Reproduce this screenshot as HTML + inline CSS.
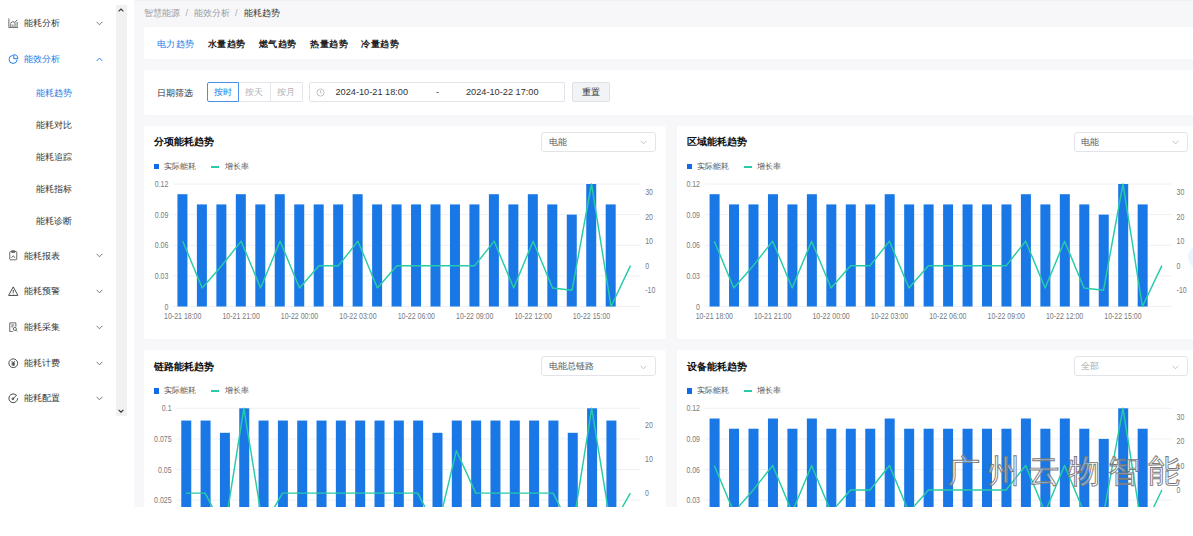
<!DOCTYPE html>
<html><head><meta charset="utf-8">
<style>
*{margin:0;padding:0;box-sizing:border-box}
html,body{width:1193px;height:536px;overflow:hidden;background:#fff;font-family:"Liberation Sans", sans-serif}
#page{position:absolute;left:0;top:0;width:1193px;height:507px;overflow:hidden;background:#fff}
.mi{position:absolute;left:0;width:117px;height:14px;line-height:14px;font-size:9px}
.mi .ic{position:absolute;left:8px;top:1.75px;width:10.5px;height:10.5px}
.mi .ic svg{display:block}
.mi .mt{position:absolute;left:23.5px;top:0}
.mi .chev{position:absolute;left:96px;top:4.8px;width:7px;height:5px}
.mi .chev svg{display:block}
.si{position:absolute;left:36px;height:14px;line-height:14px;font-size:9px}
#sb{position:absolute;left:116.3px;top:5px;width:10.7px;height:411px;background:#f1f1f1}
#main{position:absolute;left:134px;top:0;width:1059px;height:507px;background:#f7f7f9;border-top:1px solid #f0f0f2}
.card{position:absolute;background:#fff;border-radius:3px}
.bc{position:absolute;top:6px;height:14px;line-height:14px;font-size:9px;color:#999}
.tab{position:absolute;top:36.5px;height:14px;line-height:14px;font-size:9.4px;font-weight:600;color:#222;letter-spacing:0.6px}
.lbl{position:absolute;font-size:8.8px;color:#333;line-height:14px;height:14px}
.btn{position:absolute;top:81.8px;height:20.6px;width:32px;border:1px solid #e3e5ea;font-size:8.8px;line-height:18.8px;text-align:center;color:#b0b3b9;background:#fff}
.title{position:absolute;font-size:10.3px;font-weight:bold;color:#111;line-height:14px;height:14px}
.sel{position:absolute;height:20px;border:1px solid #e2e4e9;border-radius:3px;background:#fff;font-size:9px;color:#555;line-height:18px;padding-left:6.5px}
.sel svg{position:absolute;right:8px;top:7.5px}
.leg{position:absolute;font-size:7.8px;color:#555;line-height:10px;height:10px}
.sq{position:absolute;width:5.2px;height:5.4px;background:#0f6be6}
.ln{position:absolute;width:8px;height:2px;background:#26cca6}
svg#charts{position:absolute;left:0;top:0}
.j{display:inline-block;white-space:nowrap;text-align:justify;text-align-last:justify;vertical-align:top}
.wm{font-family:"Liberation Sans", sans-serif}
.ax{font-family:"Liberation Sans", sans-serif;font-size:8.8px;fill:#777a80}
</style></head><body>
<div id="page">
<div id="side">
<div class="mi" style="top:16.0px;color:#333"><span class="ic"><svg width="10.5" height="10.5" viewBox="0 0 12 12" fill="none" stroke="#555" stroke-width="1"><path d="M1 0.5 V11 H11.5"/><path d="M3.2 10.5 V6.5 M5.6 10.5 V7.5 M8 10.5 V5.5 M10.4 10.5 V4.5"/><path d="M2.8 5.8 L5.4 4.2 L7.6 5 L10.6 2.2"/></svg></span><span class="mt"><span class="j" style="width:36px">能耗分析</span></span><span class="chev"><svg width="7" height="5" viewBox="0 0 7 5"><path d="M0.6 0.8 L3.5 3.8 L6.4 0.8" fill="none" stroke="#666" stroke-width="0.9"/></svg></span></div>
<div class="mi" style="top:52.0px;color:#1a78e6"><span class="ic"><svg width="10.5" height="10.5" viewBox="0 0 12 12" fill="none" stroke="#1a78e6" stroke-width="1.1"><path d="M5.4 1.6 A4.6 4.6 0 1 0 10.4 6.6"/><path d="M6.6 0.8 V5.4 H11.2 A4.6 4.6 0 0 0 6.6 0.8 Z"/></svg></span><span class="mt"><span class="j" style="width:36px">能效分析</span></span><span class="chev"><svg width="7" height="5" viewBox="0 0 7 5"><path d="M0.6 4 L3.5 1 L6.4 4" fill="none" stroke="#1a78e6" stroke-width="0.9"/></svg></span></div>
<div class="si" style="top:85.8px;color:#1a78e6"><span class="j" style="width:36px">能耗趋势</span></div>
<div class="si" style="top:118.0px;color:#333"><span class="j" style="width:36px">能耗对比</span></div>
<div class="si" style="top:150.0px;color:#333"><span class="j" style="width:36px">能耗追踪</span></div>
<div class="si" style="top:182.0px;color:#333"><span class="j" style="width:36px">能耗指标</span></div>
<div class="si" style="top:214.0px;color:#333"><span class="j" style="width:36px">能耗诊断</span></div>
<div class="mi" style="top:248.5px;color:#333"><span class="ic"><svg width="10.5" height="10.5" viewBox="0 0 12 12" fill="none" stroke="#555" stroke-width="1"><rect x="2" y="1.8" width="8" height="9.4" rx="1"/><rect x="4" y="0.8" width="4" height="2" rx="0.5"/><path d="M4 9 L6 6.5 L8 9"/></svg></span><span class="mt"><span class="j" style="width:36px">能耗报表</span></span><span class="chev"><svg width="7" height="5" viewBox="0 0 7 5"><path d="M0.6 0.8 L3.5 3.8 L6.4 0.8" fill="none" stroke="#666" stroke-width="0.9"/></svg></span></div>
<div class="mi" style="top:284.3px;color:#333"><span class="ic"><svg width="10.5" height="10.5" viewBox="0 0 12 12" fill="none" stroke="#333" stroke-width="1"><path d="M6 1 L11.3 10.8 H0.7 Z"/><path d="M6 4.5 V7.8 M6 8.8 V9.6"/></svg></span><span class="mt"><span class="j" style="width:36px">能耗预警</span></span><span class="chev"><svg width="7" height="5" viewBox="0 0 7 5"><path d="M0.6 0.8 L3.5 3.8 L6.4 0.8" fill="none" stroke="#666" stroke-width="0.9"/></svg></span></div>
<div class="mi" style="top:319.9px;color:#333"><span class="ic"><svg width="10.5" height="10.5" viewBox="0 0 12 12" fill="none" stroke="#555" stroke-width="1"><path d="M9 5.5 V1 H2 V11 H5.5"/><path d="M3.8 3.5 H7.2 M3.8 5.5 H6"/><circle cx="7.8" cy="8" r="1.8"/><path d="M9.1 9.3 L10.6 10.8"/></svg></span><span class="mt"><span class="j" style="width:36px">能耗采集</span></span><span class="chev"><svg width="7" height="5" viewBox="0 0 7 5"><path d="M0.6 0.8 L3.5 3.8 L6.4 0.8" fill="none" stroke="#666" stroke-width="0.9"/></svg></span></div>
<div class="mi" style="top:355.9px;color:#333"><span class="ic"><svg width="10.5" height="10.5" viewBox="0 0 12 12" fill="none" stroke="#333" stroke-width="1"><circle cx="6" cy="6" r="5"/><path d="M4 3.5 L6 5.6 L8 3.5 M4 6 H8 M4 7.8 H8 M6 5.6 V9.2"/></svg></span><span class="mt"><span class="j" style="width:36px">能耗计费</span></span><span class="chev"><svg width="7" height="5" viewBox="0 0 7 5"><path d="M0.6 0.8 L3.5 3.8 L6.4 0.8" fill="none" stroke="#666" stroke-width="0.9"/></svg></span></div>
<div class="mi" style="top:391.3px;color:#333"><span class="ic"><svg width="10.5" height="10.5" viewBox="0 0 12 12" fill="none" stroke="#333" stroke-width="1"><path d="M9.8 2.8 A5 5 0 1 0 11 6"/><path d="M5.2 7 L9.8 2.6"/><circle cx="5.6" cy="6.6" r="1"/></svg></span><span class="mt"><span class="j" style="width:36px">能耗配置</span></span><span class="chev"><svg width="7" height="5" viewBox="0 0 7 5"><path d="M0.6 0.8 L3.5 3.8 L6.4 0.8" fill="none" stroke="#666" stroke-width="0.9"/></svg></span></div>
</div>
<div id="sb">
 <svg style="position:absolute;left:2px;top:3px" width="6" height="4" viewBox="0 0 6 4"><path d="M0.6 3.4 L3 1 L5.4 3.4" fill="none" stroke="#333" stroke-width="1.1"/></svg>
 <svg style="position:absolute;left:2px;top:404px" width="6" height="4" viewBox="0 0 6 4"><path d="M0.6 0.8 L3 3.2 L5.4 0.8" fill="none" stroke="#333" stroke-width="1.1"/></svg>
</div>
<div id="main"></div>
<div class="bc" style="left:144px"><span class="j" style="width:36px">智慧能源</span></div>
<div class="bc" style="left:185.5px;color:#aaa">/</div>
<div class="bc" style="left:193.5px"><span class="j" style="width:36px">能效分析</span></div>
<div class="bc" style="left:235px;color:#aaa">/</div>
<div class="bc" style="left:244px;color:#333"><span class="j" style="width:36px">能耗趋势</span></div>

<div class="card" style="left:144px;top:27px;width:1060px;height:32px"></div>
<div class="tab" style="left:156.5px;color:#1a78e6;font-weight:500"><span class="j" style="width:38.4px">电力趋势</span></div>
<div class="tab" style="left:207.5px"><span class="j" style="width:38.4px">水量趋势</span></div>
<div class="tab" style="left:258.5px"><span class="j" style="width:38.4px">燃气趋势</span></div>
<div class="tab" style="left:310px"><span class="j" style="width:38.4px">热量趋势</span></div>
<div class="tab" style="left:361px"><span class="j" style="width:38.4px">冷量趋势</span></div>

<div class="card" style="left:144px;top:70px;width:1060px;height:45px"></div>
<div class="lbl" style="left:157px;top:85.8px"><span class="j" style="width:36px">日期筛选</span></div>
<div class="btn" style="left:206.5px;border-color:#4a90e8;color:#1a78e6;border-radius:2px 0 0 2px;z-index:2"><span class="j" style="width:18px">按时</span></div>
<div class="btn" style="left:238.5px;border-left:none"><span class="j" style="width:18px">按天</span></div>
<div class="btn" style="left:270.5px;border-left:none;border-radius:0 2px 2px 0"><span class="j" style="width:18px">按月</span></div>
<div class="sel" style="left:309px;top:81.8px;height:20.6px;line-height:18.8px;width:256px;border-radius:2px;color:#333;font-size:9.2px">
 <svg style="position:absolute;left:5.5px;top:5px" width="9" height="9" viewBox="0 0 9 9"><circle cx="4.5" cy="4.5" r="3.6" fill="none" stroke="#bbb" stroke-width="0.9"/><path d="M4.5 2.6 V4.6 L5.8 5.6" fill="none" stroke="#bbb" stroke-width="0.9"/></svg>
 <span style="position:absolute;left:25.5px;top:0">2024-10-21 18:00</span>
 <span style="position:absolute;left:126px;top:0">-</span>
 <span style="position:absolute;left:156px;top:0">2024-10-22 17:00</span>
</div>
<div class="sel" style="left:572.3px;top:81.8px;height:20.6px;line-height:18.8px;width:38px;background:#f2f3f7;border-color:#dfe1e6;color:#333;padding-left:0;text-align:center;border-radius:2px"><span class="j" style="width:18px">重置</span></div>

<div class="card" style="left:144px;top:126px;width:521.7px;height:213px"></div>
<div class="card" style="left:676.6px;top:126px;width:521.7px;height:213px"></div>
<div class="card" style="left:144px;top:350.3px;width:521.7px;height:213px"></div>
<div class="card" style="left:676.6px;top:350.3px;width:521.7px;height:213px"></div>

<div class="title" style="left:154px;top:135px"><span class="j" style="width:60px">分项能耗趋势</span></div>
<div class="title" style="left:686.5px;top:135px"><span class="j" style="width:60px">区域能耗趋势</span></div>
<div class="title" style="left:154px;top:359.5px"><span class="j" style="width:60px">链路能耗趋势</span></div>
<div class="title" style="left:686.5px;top:359.5px"><span class="j" style="width:60px">设备能耗趋势</span></div>

<div class="sel" style="left:541.4px;top:131.8px;width:114.3px"><span class="j" style="width:18px">电能</span><svg width="7" height="5" viewBox="0 0 7 5"><path d="M0.6 0.8 L3.5 3.8 L6.4 0.8" fill="none" stroke="#bbb" stroke-width="0.9"/></svg></div>
<div class="sel" style="left:1073.5px;top:131.8px;width:114.3px"><span class="j" style="width:18px">电能</span><svg width="7" height="5" viewBox="0 0 7 5"><path d="M0.6 0.8 L3.5 3.8 L6.4 0.8" fill="none" stroke="#bbb" stroke-width="0.9"/></svg></div>
<div class="sel" style="left:541.4px;top:356.3px;width:114.3px"><span class="j" style="width:45px">电能总链路</span><svg width="7" height="5" viewBox="0 0 7 5"><path d="M0.6 0.8 L3.5 3.8 L6.4 0.8" fill="none" stroke="#bbb" stroke-width="0.9"/></svg></div>
<div class="sel" style="left:1073.5px;top:356.3px;width:114.3px;color:#aaa"><span class="j" style="width:18px">全部</span><svg width="7" height="5" viewBox="0 0 7 5"><path d="M0.6 0.8 L3.5 3.8 L6.4 0.8" fill="none" stroke="#bbb" stroke-width="0.9"/></svg></div>

<div class="sq" style="left:154.0px;top:164.0px"></div>
<div class="leg" style="left:164.2px;top:161.8px"><span class="j" style="width:32px">实际能耗</span></div>
<div class="ln" style="left:211.0px;top:165.7px"></div>
<div class="leg" style="left:224.8px;top:161.8px"><span class="j" style="width:24px">增长率</span></div>
<div class="sq" style="left:686.6px;top:164.0px"></div>
<div class="leg" style="left:696.8px;top:161.8px"><span class="j" style="width:32px">实际能耗</span></div>
<div class="ln" style="left:743.6px;top:165.7px"></div>
<div class="leg" style="left:757.4px;top:161.8px"><span class="j" style="width:24px">增长率</span></div>
<div class="sq" style="left:154.0px;top:388.3px"></div>
<div class="leg" style="left:164.2px;top:386.1px"><span class="j" style="width:32px">实际能耗</span></div>
<div class="ln" style="left:211.0px;top:390.0px"></div>
<div class="leg" style="left:224.8px;top:386.1px"><span class="j" style="width:24px">增长率</span></div>
<div class="sq" style="left:686.6px;top:388.3px"></div>
<div class="leg" style="left:696.8px;top:386.1px"><span class="j" style="width:32px">实际能耗</span></div>
<div class="ln" style="left:743.6px;top:390.0px"></div>
<div class="leg" style="left:757.4px;top:386.1px"><span class="j" style="width:24px">增长率</span></div>

<svg id="charts" width="1193" height="507" viewBox="0 0 1193 507">
<line x1="173.00" y1="306.50" x2="640.20" y2="306.50" stroke="#eef0f3" stroke-width="1"/>
<text x="168.40" y="309.60" text-anchor="end" class="ax" textLength="3.89" lengthAdjust="spacingAndGlyphs">0</text>
<line x1="173.00" y1="275.88" x2="640.20" y2="275.88" stroke="#eef0f3" stroke-width="1"/>
<text x="168.40" y="278.98" text-anchor="end" class="ax" textLength="13.62" lengthAdjust="spacingAndGlyphs">0.03</text>
<line x1="173.00" y1="245.25" x2="640.20" y2="245.25" stroke="#eef0f3" stroke-width="1"/>
<text x="168.40" y="248.35" text-anchor="end" class="ax" textLength="13.62" lengthAdjust="spacingAndGlyphs">0.06</text>
<line x1="173.00" y1="214.62" x2="640.20" y2="214.62" stroke="#eef0f3" stroke-width="1"/>
<text x="168.40" y="217.72" text-anchor="end" class="ax" textLength="13.62" lengthAdjust="spacingAndGlyphs">0.09</text>
<line x1="173.00" y1="184.00" x2="640.20" y2="184.00" stroke="#eef0f3" stroke-width="1"/>
<text x="168.40" y="187.10" text-anchor="end" class="ax" textLength="13.62" lengthAdjust="spacingAndGlyphs">0.12</text>
<text x="645.20" y="195.27" class="ax" textLength="7.79" lengthAdjust="spacingAndGlyphs">30</text>
<text x="645.20" y="219.77" class="ax" textLength="7.79" lengthAdjust="spacingAndGlyphs">20</text>
<text x="645.20" y="244.27" class="ax" textLength="7.79" lengthAdjust="spacingAndGlyphs">10</text>
<text x="645.20" y="268.77" class="ax" textLength="3.89" lengthAdjust="spacingAndGlyphs">0</text>
<text x="645.20" y="293.27" class="ax" textLength="10.12" lengthAdjust="spacingAndGlyphs">-10</text>
<rect x="177.43" y="194.21" width="10.00" height="112.29" fill="#1a78e6"/>
<rect x="196.90" y="204.42" width="10.00" height="102.08" fill="#1a78e6"/>
<rect x="216.37" y="204.42" width="10.00" height="102.08" fill="#1a78e6"/>
<rect x="235.83" y="194.21" width="10.00" height="112.29" fill="#1a78e6"/>
<rect x="255.30" y="204.42" width="10.00" height="102.08" fill="#1a78e6"/>
<rect x="274.77" y="194.21" width="10.00" height="112.29" fill="#1a78e6"/>
<rect x="294.23" y="204.42" width="10.00" height="102.08" fill="#1a78e6"/>
<rect x="313.70" y="204.42" width="10.00" height="102.08" fill="#1a78e6"/>
<rect x="333.17" y="204.42" width="10.00" height="102.08" fill="#1a78e6"/>
<rect x="352.63" y="194.21" width="10.00" height="112.29" fill="#1a78e6"/>
<rect x="372.10" y="204.42" width="10.00" height="102.08" fill="#1a78e6"/>
<rect x="391.57" y="204.42" width="10.00" height="102.08" fill="#1a78e6"/>
<rect x="411.03" y="204.42" width="10.00" height="102.08" fill="#1a78e6"/>
<rect x="430.50" y="204.42" width="10.00" height="102.08" fill="#1a78e6"/>
<rect x="449.97" y="204.42" width="10.00" height="102.08" fill="#1a78e6"/>
<rect x="469.43" y="204.42" width="10.00" height="102.08" fill="#1a78e6"/>
<rect x="488.90" y="194.21" width="10.00" height="112.29" fill="#1a78e6"/>
<rect x="508.37" y="204.42" width="10.00" height="102.08" fill="#1a78e6"/>
<rect x="527.83" y="194.21" width="10.00" height="112.29" fill="#1a78e6"/>
<rect x="547.30" y="204.42" width="10.00" height="102.08" fill="#1a78e6"/>
<rect x="566.77" y="214.62" width="10.00" height="91.88" fill="#1a78e6"/>
<rect x="586.23" y="184.00" width="10.00" height="122.50" fill="#1a78e6"/>
<rect x="605.70" y="204.42" width="10.00" height="102.08" fill="#1a78e6"/>
<polyline points="182.73,241.17 202.20,287.94 221.67,265.67 241.13,241.17 260.60,287.94 280.07,241.17 299.53,287.94 319.00,265.67 338.47,265.67 357.93,241.17 377.40,287.94 396.87,265.67 416.33,265.67 435.80,265.67 455.27,265.67 474.73,265.67 494.20,241.17 513.67,287.94 533.13,241.17 552.60,287.94 572.07,290.17 591.53,184.00 611.00,306.50 630.47,265.67" fill="none" stroke="#26cca6" stroke-width="1.45" stroke-linejoin="round"/>
<text x="182.73" y="318.90" text-anchor="middle" class="ax" textLength="37.37" lengthAdjust="spacingAndGlyphs">10-21 18:00</text>
<text x="241.13" y="318.90" text-anchor="middle" class="ax" textLength="37.37" lengthAdjust="spacingAndGlyphs">10-21 21:00</text>
<text x="299.53" y="318.90" text-anchor="middle" class="ax" textLength="37.37" lengthAdjust="spacingAndGlyphs">10-22 00:00</text>
<text x="357.93" y="318.90" text-anchor="middle" class="ax" textLength="37.37" lengthAdjust="spacingAndGlyphs">10-22 03:00</text>
<text x="416.33" y="318.90" text-anchor="middle" class="ax" textLength="37.37" lengthAdjust="spacingAndGlyphs">10-22 06:00</text>
<text x="474.73" y="318.90" text-anchor="middle" class="ax" textLength="37.37" lengthAdjust="spacingAndGlyphs">10-22 09:00</text>
<text x="533.13" y="318.90" text-anchor="middle" class="ax" textLength="37.37" lengthAdjust="spacingAndGlyphs">10-22 12:00</text>
<text x="591.53" y="318.90" text-anchor="middle" class="ax" textLength="37.37" lengthAdjust="spacingAndGlyphs">10-22 15:00</text>
<line x1="704.60" y1="306.50" x2="1171.60" y2="306.50" stroke="#eef0f3" stroke-width="1"/>
<text x="700.00" y="309.60" text-anchor="end" class="ax" textLength="3.89" lengthAdjust="spacingAndGlyphs">0</text>
<line x1="704.60" y1="275.88" x2="1171.60" y2="275.88" stroke="#eef0f3" stroke-width="1"/>
<text x="700.00" y="278.98" text-anchor="end" class="ax" textLength="13.62" lengthAdjust="spacingAndGlyphs">0.03</text>
<line x1="704.60" y1="245.25" x2="1171.60" y2="245.25" stroke="#eef0f3" stroke-width="1"/>
<text x="700.00" y="248.35" text-anchor="end" class="ax" textLength="13.62" lengthAdjust="spacingAndGlyphs">0.06</text>
<line x1="704.60" y1="214.62" x2="1171.60" y2="214.62" stroke="#eef0f3" stroke-width="1"/>
<text x="700.00" y="217.72" text-anchor="end" class="ax" textLength="13.62" lengthAdjust="spacingAndGlyphs">0.09</text>
<line x1="704.60" y1="184.00" x2="1171.60" y2="184.00" stroke="#eef0f3" stroke-width="1"/>
<text x="700.00" y="187.10" text-anchor="end" class="ax" textLength="13.62" lengthAdjust="spacingAndGlyphs">0.12</text>
<text x="1176.60" y="195.27" class="ax" textLength="7.79" lengthAdjust="spacingAndGlyphs">30</text>
<text x="1176.60" y="219.77" class="ax" textLength="7.79" lengthAdjust="spacingAndGlyphs">20</text>
<text x="1176.60" y="244.27" class="ax" textLength="7.79" lengthAdjust="spacingAndGlyphs">10</text>
<text x="1176.60" y="268.77" class="ax" textLength="3.89" lengthAdjust="spacingAndGlyphs">0</text>
<text x="1176.60" y="293.27" class="ax" textLength="10.12" lengthAdjust="spacingAndGlyphs">-10</text>
<rect x="709.58" y="194.21" width="10.00" height="112.29" fill="#1a78e6"/>
<rect x="729.04" y="204.42" width="10.00" height="102.08" fill="#1a78e6"/>
<rect x="748.50" y="204.42" width="10.00" height="102.08" fill="#1a78e6"/>
<rect x="767.95" y="194.21" width="10.00" height="112.29" fill="#1a78e6"/>
<rect x="787.41" y="204.42" width="10.00" height="102.08" fill="#1a78e6"/>
<rect x="806.87" y="194.21" width="10.00" height="112.29" fill="#1a78e6"/>
<rect x="826.33" y="204.42" width="10.00" height="102.08" fill="#1a78e6"/>
<rect x="845.79" y="204.42" width="10.00" height="102.08" fill="#1a78e6"/>
<rect x="865.25" y="204.42" width="10.00" height="102.08" fill="#1a78e6"/>
<rect x="884.70" y="194.21" width="10.00" height="112.29" fill="#1a78e6"/>
<rect x="904.16" y="204.42" width="10.00" height="102.08" fill="#1a78e6"/>
<rect x="923.62" y="204.42" width="10.00" height="102.08" fill="#1a78e6"/>
<rect x="943.08" y="204.42" width="10.00" height="102.08" fill="#1a78e6"/>
<rect x="962.54" y="204.42" width="10.00" height="102.08" fill="#1a78e6"/>
<rect x="982.00" y="204.42" width="10.00" height="102.08" fill="#1a78e6"/>
<rect x="1001.45" y="204.42" width="10.00" height="102.08" fill="#1a78e6"/>
<rect x="1020.91" y="194.21" width="10.00" height="112.29" fill="#1a78e6"/>
<rect x="1040.37" y="204.42" width="10.00" height="102.08" fill="#1a78e6"/>
<rect x="1059.83" y="194.21" width="10.00" height="112.29" fill="#1a78e6"/>
<rect x="1079.29" y="204.42" width="10.00" height="102.08" fill="#1a78e6"/>
<rect x="1098.75" y="214.62" width="10.00" height="91.88" fill="#1a78e6"/>
<rect x="1118.20" y="184.00" width="10.00" height="122.50" fill="#1a78e6"/>
<rect x="1137.66" y="204.42" width="10.00" height="102.08" fill="#1a78e6"/>
<polyline points="714.33,241.17 733.79,287.94 753.25,265.67 772.70,241.17 792.16,287.94 811.62,241.17 831.08,287.94 850.54,265.67 870.00,265.67 889.45,241.17 908.91,287.94 928.37,265.67 947.83,265.67 967.29,265.67 986.75,265.67 1006.20,265.67 1025.66,241.17 1045.12,287.94 1064.58,241.17 1084.04,287.94 1103.50,290.17 1122.95,184.00 1142.41,306.50 1161.87,265.67" fill="none" stroke="#26cca6" stroke-width="1.45" stroke-linejoin="round"/>
<text x="714.33" y="318.90" text-anchor="middle" class="ax" textLength="37.37" lengthAdjust="spacingAndGlyphs">10-21 18:00</text>
<text x="772.70" y="318.90" text-anchor="middle" class="ax" textLength="37.37" lengthAdjust="spacingAndGlyphs">10-21 21:00</text>
<text x="831.08" y="318.90" text-anchor="middle" class="ax" textLength="37.37" lengthAdjust="spacingAndGlyphs">10-22 00:00</text>
<text x="889.45" y="318.90" text-anchor="middle" class="ax" textLength="37.37" lengthAdjust="spacingAndGlyphs">10-22 03:00</text>
<text x="947.83" y="318.90" text-anchor="middle" class="ax" textLength="37.37" lengthAdjust="spacingAndGlyphs">10-22 06:00</text>
<text x="1006.20" y="318.90" text-anchor="middle" class="ax" textLength="37.37" lengthAdjust="spacingAndGlyphs">10-22 09:00</text>
<text x="1064.58" y="318.90" text-anchor="middle" class="ax" textLength="37.37" lengthAdjust="spacingAndGlyphs">10-22 12:00</text>
<text x="1122.95" y="318.90" text-anchor="middle" class="ax" textLength="37.37" lengthAdjust="spacingAndGlyphs">10-22 15:00</text>
<line x1="176.20" y1="530.80" x2="640.00" y2="530.80" stroke="#eef0f3" stroke-width="1"/>
<text x="171.60" y="533.90" text-anchor="end" class="ax" textLength="3.89" lengthAdjust="spacingAndGlyphs">0</text>
<line x1="176.20" y1="500.17" x2="640.00" y2="500.17" stroke="#eef0f3" stroke-width="1"/>
<text x="171.60" y="503.27" text-anchor="end" class="ax" textLength="17.52" lengthAdjust="spacingAndGlyphs">0.025</text>
<line x1="176.20" y1="469.55" x2="640.00" y2="469.55" stroke="#eef0f3" stroke-width="1"/>
<text x="171.60" y="472.65" text-anchor="end" class="ax" textLength="13.62" lengthAdjust="spacingAndGlyphs">0.05</text>
<line x1="176.20" y1="438.93" x2="640.00" y2="438.93" stroke="#eef0f3" stroke-width="1"/>
<text x="171.60" y="442.03" text-anchor="end" class="ax" textLength="17.52" lengthAdjust="spacingAndGlyphs">0.075</text>
<line x1="176.20" y1="408.30" x2="640.00" y2="408.30" stroke="#eef0f3" stroke-width="1"/>
<text x="171.60" y="411.40" text-anchor="end" class="ax" textLength="9.73" lengthAdjust="spacingAndGlyphs">0.1</text>
<text x="645.00" y="428.36" class="ax" textLength="7.79" lengthAdjust="spacingAndGlyphs">20</text>
<text x="645.00" y="462.28" class="ax" textLength="7.79" lengthAdjust="spacingAndGlyphs">10</text>
<text x="645.00" y="496.21" class="ax" textLength="3.89" lengthAdjust="spacingAndGlyphs">0</text>
<text x="645.00" y="530.13" class="ax" textLength="10.12" lengthAdjust="spacingAndGlyphs">-10</text>
<rect x="181.26" y="420.55" width="10.00" height="110.25" fill="#1a78e6"/>
<rect x="200.59" y="420.55" width="10.00" height="110.25" fill="#1a78e6"/>
<rect x="219.91" y="432.80" width="10.00" height="98.00" fill="#1a78e6"/>
<rect x="239.24" y="408.30" width="10.00" height="122.50" fill="#1a78e6"/>
<rect x="258.56" y="420.55" width="10.00" height="110.25" fill="#1a78e6"/>
<rect x="277.89" y="420.55" width="10.00" height="110.25" fill="#1a78e6"/>
<rect x="297.21" y="420.55" width="10.00" height="110.25" fill="#1a78e6"/>
<rect x="316.54" y="420.55" width="10.00" height="110.25" fill="#1a78e6"/>
<rect x="335.86" y="420.55" width="10.00" height="110.25" fill="#1a78e6"/>
<rect x="355.19" y="420.55" width="10.00" height="110.25" fill="#1a78e6"/>
<rect x="374.51" y="420.55" width="10.00" height="110.25" fill="#1a78e6"/>
<rect x="393.84" y="420.55" width="10.00" height="110.25" fill="#1a78e6"/>
<rect x="413.16" y="420.55" width="10.00" height="110.25" fill="#1a78e6"/>
<rect x="432.49" y="432.80" width="10.00" height="98.00" fill="#1a78e6"/>
<rect x="451.81" y="420.55" width="10.00" height="110.25" fill="#1a78e6"/>
<rect x="471.14" y="420.55" width="10.00" height="110.25" fill="#1a78e6"/>
<rect x="490.46" y="420.55" width="10.00" height="110.25" fill="#1a78e6"/>
<rect x="509.79" y="420.55" width="10.00" height="110.25" fill="#1a78e6"/>
<rect x="529.11" y="420.55" width="10.00" height="110.25" fill="#1a78e6"/>
<rect x="548.44" y="420.55" width="10.00" height="110.25" fill="#1a78e6"/>
<rect x="567.76" y="432.80" width="10.00" height="98.00" fill="#1a78e6"/>
<rect x="587.09" y="408.30" width="10.00" height="122.50" fill="#1a78e6"/>
<rect x="606.41" y="420.55" width="10.00" height="110.25" fill="#1a78e6"/>
<polyline points="185.86,493.11 205.19,493.11 224.51,530.80 243.84,408.30 263.16,527.03 282.49,493.11 301.81,493.11 321.14,493.11 340.46,493.11 359.79,493.11 379.11,493.11 398.44,493.11 417.76,493.11 437.09,530.80 456.41,450.70 475.74,493.11 495.06,493.11 514.39,493.11 533.71,493.11 553.04,493.11 572.36,530.80 591.69,408.30 611.01,527.03 630.34,493.11" fill="none" stroke="#26cca6" stroke-width="1.45" stroke-linejoin="round"/>
<text x="185.86" y="543.20" text-anchor="middle" class="ax" textLength="37.37" lengthAdjust="spacingAndGlyphs">10-21 18:00</text>
<text x="243.84" y="543.20" text-anchor="middle" class="ax" textLength="37.37" lengthAdjust="spacingAndGlyphs">10-21 21:00</text>
<text x="301.81" y="543.20" text-anchor="middle" class="ax" textLength="37.37" lengthAdjust="spacingAndGlyphs">10-22 00:00</text>
<text x="359.79" y="543.20" text-anchor="middle" class="ax" textLength="37.37" lengthAdjust="spacingAndGlyphs">10-22 03:00</text>
<text x="417.76" y="543.20" text-anchor="middle" class="ax" textLength="37.37" lengthAdjust="spacingAndGlyphs">10-22 06:00</text>
<text x="475.74" y="543.20" text-anchor="middle" class="ax" textLength="37.37" lengthAdjust="spacingAndGlyphs">10-22 09:00</text>
<text x="533.71" y="543.20" text-anchor="middle" class="ax" textLength="37.37" lengthAdjust="spacingAndGlyphs">10-22 12:00</text>
<text x="591.69" y="543.20" text-anchor="middle" class="ax" textLength="37.37" lengthAdjust="spacingAndGlyphs">10-22 15:00</text>
<line x1="704.60" y1="530.80" x2="1171.60" y2="530.80" stroke="#eef0f3" stroke-width="1"/>
<text x="700.00" y="533.90" text-anchor="end" class="ax" textLength="3.89" lengthAdjust="spacingAndGlyphs">0</text>
<line x1="704.60" y1="500.17" x2="1171.60" y2="500.17" stroke="#eef0f3" stroke-width="1"/>
<text x="700.00" y="503.27" text-anchor="end" class="ax" textLength="13.62" lengthAdjust="spacingAndGlyphs">0.03</text>
<line x1="704.60" y1="469.55" x2="1171.60" y2="469.55" stroke="#eef0f3" stroke-width="1"/>
<text x="700.00" y="472.65" text-anchor="end" class="ax" textLength="13.62" lengthAdjust="spacingAndGlyphs">0.06</text>
<line x1="704.60" y1="438.93" x2="1171.60" y2="438.93" stroke="#eef0f3" stroke-width="1"/>
<text x="700.00" y="442.03" text-anchor="end" class="ax" textLength="13.62" lengthAdjust="spacingAndGlyphs">0.09</text>
<line x1="704.60" y1="408.30" x2="1171.60" y2="408.30" stroke="#eef0f3" stroke-width="1"/>
<text x="700.00" y="411.40" text-anchor="end" class="ax" textLength="13.62" lengthAdjust="spacingAndGlyphs">0.12</text>
<text x="1176.60" y="419.57" class="ax" textLength="7.79" lengthAdjust="spacingAndGlyphs">30</text>
<text x="1176.60" y="444.07" class="ax" textLength="7.79" lengthAdjust="spacingAndGlyphs">20</text>
<text x="1176.60" y="468.57" class="ax" textLength="7.79" lengthAdjust="spacingAndGlyphs">10</text>
<text x="1176.60" y="493.07" class="ax" textLength="3.89" lengthAdjust="spacingAndGlyphs">0</text>
<text x="1176.60" y="517.57" class="ax" textLength="10.12" lengthAdjust="spacingAndGlyphs">-10</text>
<rect x="709.58" y="418.51" width="10.00" height="112.29" fill="#1a78e6"/>
<rect x="729.04" y="428.72" width="10.00" height="102.08" fill="#1a78e6"/>
<rect x="748.50" y="428.72" width="10.00" height="102.08" fill="#1a78e6"/>
<rect x="767.95" y="418.51" width="10.00" height="112.29" fill="#1a78e6"/>
<rect x="787.41" y="428.72" width="10.00" height="102.08" fill="#1a78e6"/>
<rect x="806.87" y="418.51" width="10.00" height="112.29" fill="#1a78e6"/>
<rect x="826.33" y="428.72" width="10.00" height="102.08" fill="#1a78e6"/>
<rect x="845.79" y="428.72" width="10.00" height="102.08" fill="#1a78e6"/>
<rect x="865.25" y="428.72" width="10.00" height="102.08" fill="#1a78e6"/>
<rect x="884.70" y="418.51" width="10.00" height="112.29" fill="#1a78e6"/>
<rect x="904.16" y="428.72" width="10.00" height="102.08" fill="#1a78e6"/>
<rect x="923.62" y="428.72" width="10.00" height="102.08" fill="#1a78e6"/>
<rect x="943.08" y="428.72" width="10.00" height="102.08" fill="#1a78e6"/>
<rect x="962.54" y="428.72" width="10.00" height="102.08" fill="#1a78e6"/>
<rect x="982.00" y="428.72" width="10.00" height="102.08" fill="#1a78e6"/>
<rect x="1001.45" y="428.72" width="10.00" height="102.08" fill="#1a78e6"/>
<rect x="1020.91" y="418.51" width="10.00" height="112.29" fill="#1a78e6"/>
<rect x="1040.37" y="428.72" width="10.00" height="102.08" fill="#1a78e6"/>
<rect x="1059.83" y="418.51" width="10.00" height="112.29" fill="#1a78e6"/>
<rect x="1079.29" y="428.72" width="10.00" height="102.08" fill="#1a78e6"/>
<rect x="1098.75" y="438.93" width="10.00" height="91.87" fill="#1a78e6"/>
<rect x="1118.20" y="408.30" width="10.00" height="122.50" fill="#1a78e6"/>
<rect x="1137.66" y="428.72" width="10.00" height="102.08" fill="#1a78e6"/>
<polyline points="714.33,465.47 733.79,512.24 753.25,489.97 772.70,465.47 792.16,512.24 811.62,465.47 831.08,512.24 850.54,489.97 870.00,489.97 889.45,465.47 908.91,512.24 928.37,489.97 947.83,489.97 967.29,489.97 986.75,489.97 1006.20,489.97 1025.66,465.47 1045.12,512.24 1064.58,465.47 1084.04,512.24 1103.50,514.47 1122.95,408.30 1142.41,530.80 1161.87,489.97" fill="none" stroke="#26cca6" stroke-width="1.45" stroke-linejoin="round"/>
<text x="714.33" y="543.20" text-anchor="middle" class="ax" textLength="37.37" lengthAdjust="spacingAndGlyphs">10-21 18:00</text>
<text x="772.70" y="543.20" text-anchor="middle" class="ax" textLength="37.37" lengthAdjust="spacingAndGlyphs">10-21 21:00</text>
<text x="831.08" y="543.20" text-anchor="middle" class="ax" textLength="37.37" lengthAdjust="spacingAndGlyphs">10-22 00:00</text>
<text x="889.45" y="543.20" text-anchor="middle" class="ax" textLength="37.37" lengthAdjust="spacingAndGlyphs">10-22 03:00</text>
<text x="947.83" y="543.20" text-anchor="middle" class="ax" textLength="37.37" lengthAdjust="spacingAndGlyphs">10-22 06:00</text>
<text x="1006.20" y="543.20" text-anchor="middle" class="ax" textLength="37.37" lengthAdjust="spacingAndGlyphs">10-22 09:00</text>
<text x="1064.58" y="543.20" text-anchor="middle" class="ax" textLength="37.37" lengthAdjust="spacingAndGlyphs">10-22 12:00</text>
<text x="1122.95" y="543.20" text-anchor="middle" class="ax" textLength="37.37" lengthAdjust="spacingAndGlyphs">10-22 15:00</text>
<text x="947.8" y="481.5" class="wm" font-size="32" fill="#fff" fill-opacity="0.45" stroke="#777" stroke-width="0.9" textLength="232.3" lengthAdjust="spacing">广州云物智能</text>
</svg>
<div style="position:absolute;left:1187.5px;top:245px;width:24px;height:24px;border-radius:50%;background:#e6f0fd;opacity:0.7"></div>
</div>
</body></html>
